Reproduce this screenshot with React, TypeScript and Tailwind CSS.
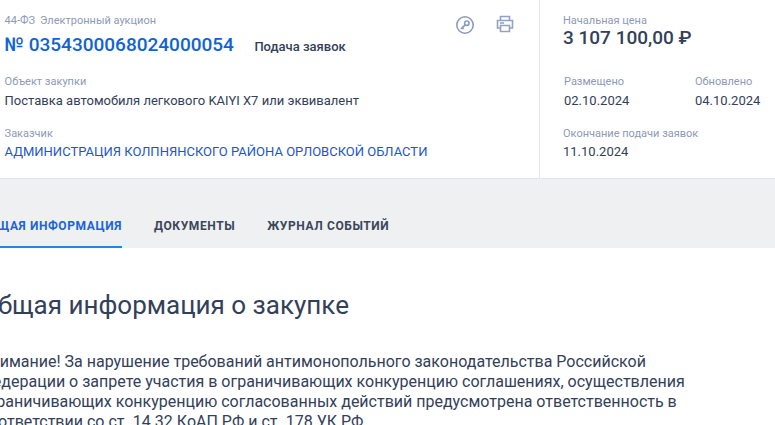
import React from "react";

const Key = () => (
  <svg width="20" height="20" viewBox="0 0 20 20" fill="none" stroke="#8b9bc0" strokeWidth="1.6">
    <circle cx="10" cy="10" r="8.2" />
    <circle cx="11.8" cy="8.2" r="2.2" />
    <path d="M10.2 9.8L6 13.9M7.2 12.7l1.3 1.3" strokeWidth="1.8" />
  </svg>
);

const Printer = () => (
  <svg width="18" height="18" viewBox="0 0 18 18" fill="none" stroke="#93a2c4" strokeWidth="1.6">
    <path d="M4.5 5.5V1.5h9v4" />
    <path d="M4.5 13H1.5V5.5h15V13h-3" />
    <path d="M4.5 10.5h9v6h-9z" />
    <path d="M4 8h4" />
  </svg>
);

const Label = ({ children, className = "" }: { children: React.ReactNode; className?: string }) => (
  <div className={`text-[11px] leading-[14px] text-[#8d9ab5] ${className}`}>{children}</div>
);

const Value = ({ children, className = "mt-[4px]" }: { children: React.ReactNode; className?: string }) => (
  <div className={`text-[13px] leading-[16px] text-[#334059] ${className}`}>{children}</div>
);

export default function App() {
  return (
    <div className="w-[775px] h-[425px] overflow-hidden bg-white font-['Roboto',sans-serif]">
      <div className="flex h-[179px] border-b border-[#dfe6f2]">
        <div className="w-[540px] shrink-0 border-r border-[#dfe6f2] pl-[4.6px] pt-[14px] flex justify-between">
          <div>
            <div className="flex gap-[5px] text-[11px] leading-[14px] text-[#8d9ab5]">
              <span>44-ФЗ</span>
              <span>Электронный аукцион</span>
            </div>
            <div className="flex items-baseline mt-[4px]">
              <span className="text-[19px] leading-[26px] font-medium text-[#0e63d8]">№ 0354300068024000054</span>
              <span className="ml-[20.5px] text-[13px] font-medium text-[#334059]">Подача заявок</span>
            </div>
            <Label className="mt-[17px]">Объект закупки</Label>
            <Value>Поставка автомобиля легкового KAIYI X7 или эквивалент</Value>
            <Label className="mt-[18px]">Заказчик</Label>
            <div className="text-[13px] leading-[16px] text-[#1c55d0] mt-[3px] whitespace-nowrap">
              АДМИНИСТРАЦИЯ КОЛПНЯНСКОГО РАЙОНА ОРЛОВСКОЙ ОБЛАСТИ
            </div>
          </div>
          <div className="flex gap-[21px] pr-[25px] pt-[1px] items-start">
            <Key />
            <Printer />
          </div>
        </div>
        <div className="flex-1 pl-[23px] pt-[14px]">
          <Label>Начальная цена</Label>
          <div className="text-[19px] leading-[20px] font-medium text-[#334059]">3 107 100,00 ₽</div>
          <div className="flex mt-[27px] pl-[1px]">
            <div className="w-[131px]">
              <Label>Размещено</Label>
              <Value>02.10.2024</Value>
            </div>
            <div>
              <Label>Обновлено</Label>
              <Value>04.10.2024</Value>
            </div>
          </div>
          <Label className="mt-[18px]">Окончание подачи заявок</Label>
          <Value className="mt-[3px]">11.10.2024</Value>
        </div>
      </div>

      <div className="h-[69px] bg-[#eef0f2] flex items-end -ml-[20px] gap-[32px] text-[12px] font-bold tracking-[0.6px]">
        <div className="h-[49px] leading-[55px] w-[142px] border-b-2 border-[#1e88e5] text-[#1c63d8] whitespace-nowrap">ОБЩАЯ ИНФОРМАЦИЯ</div>
        <div className="h-[49px] leading-[55px] text-[#3b4658]">ДОКУМЕНТЫ</div>
        <div className="h-[49px] leading-[55px] text-[#3b4658]">ЖУРНАЛ СОБЫТИЙ</div>
      </div>

      <div className="-ml-[20px] pt-[42px]">
        <h1 className="text-[26px] leading-[30px] font-normal text-[#334059]">Общая информация о закупке</h1>
        <p className="mt-[32px] ml-[0.5px] text-[16px] leading-[20px] text-[#334059] whitespace-nowrap">
          Внимание! За нарушение требований антимонопольного законодательства Российской<br />
          Федерации о запрете участия в ограничивающих конкуренцию соглашениях, осуществления<br />
          ограничивающих конкуренцию согласованных действий предусмотрена ответственность в<br />
          соответствии со ст. 14.32 КоАП РФ и ст. 178 УК РФ
        </p>
      </div>
    </div>
  );
}
